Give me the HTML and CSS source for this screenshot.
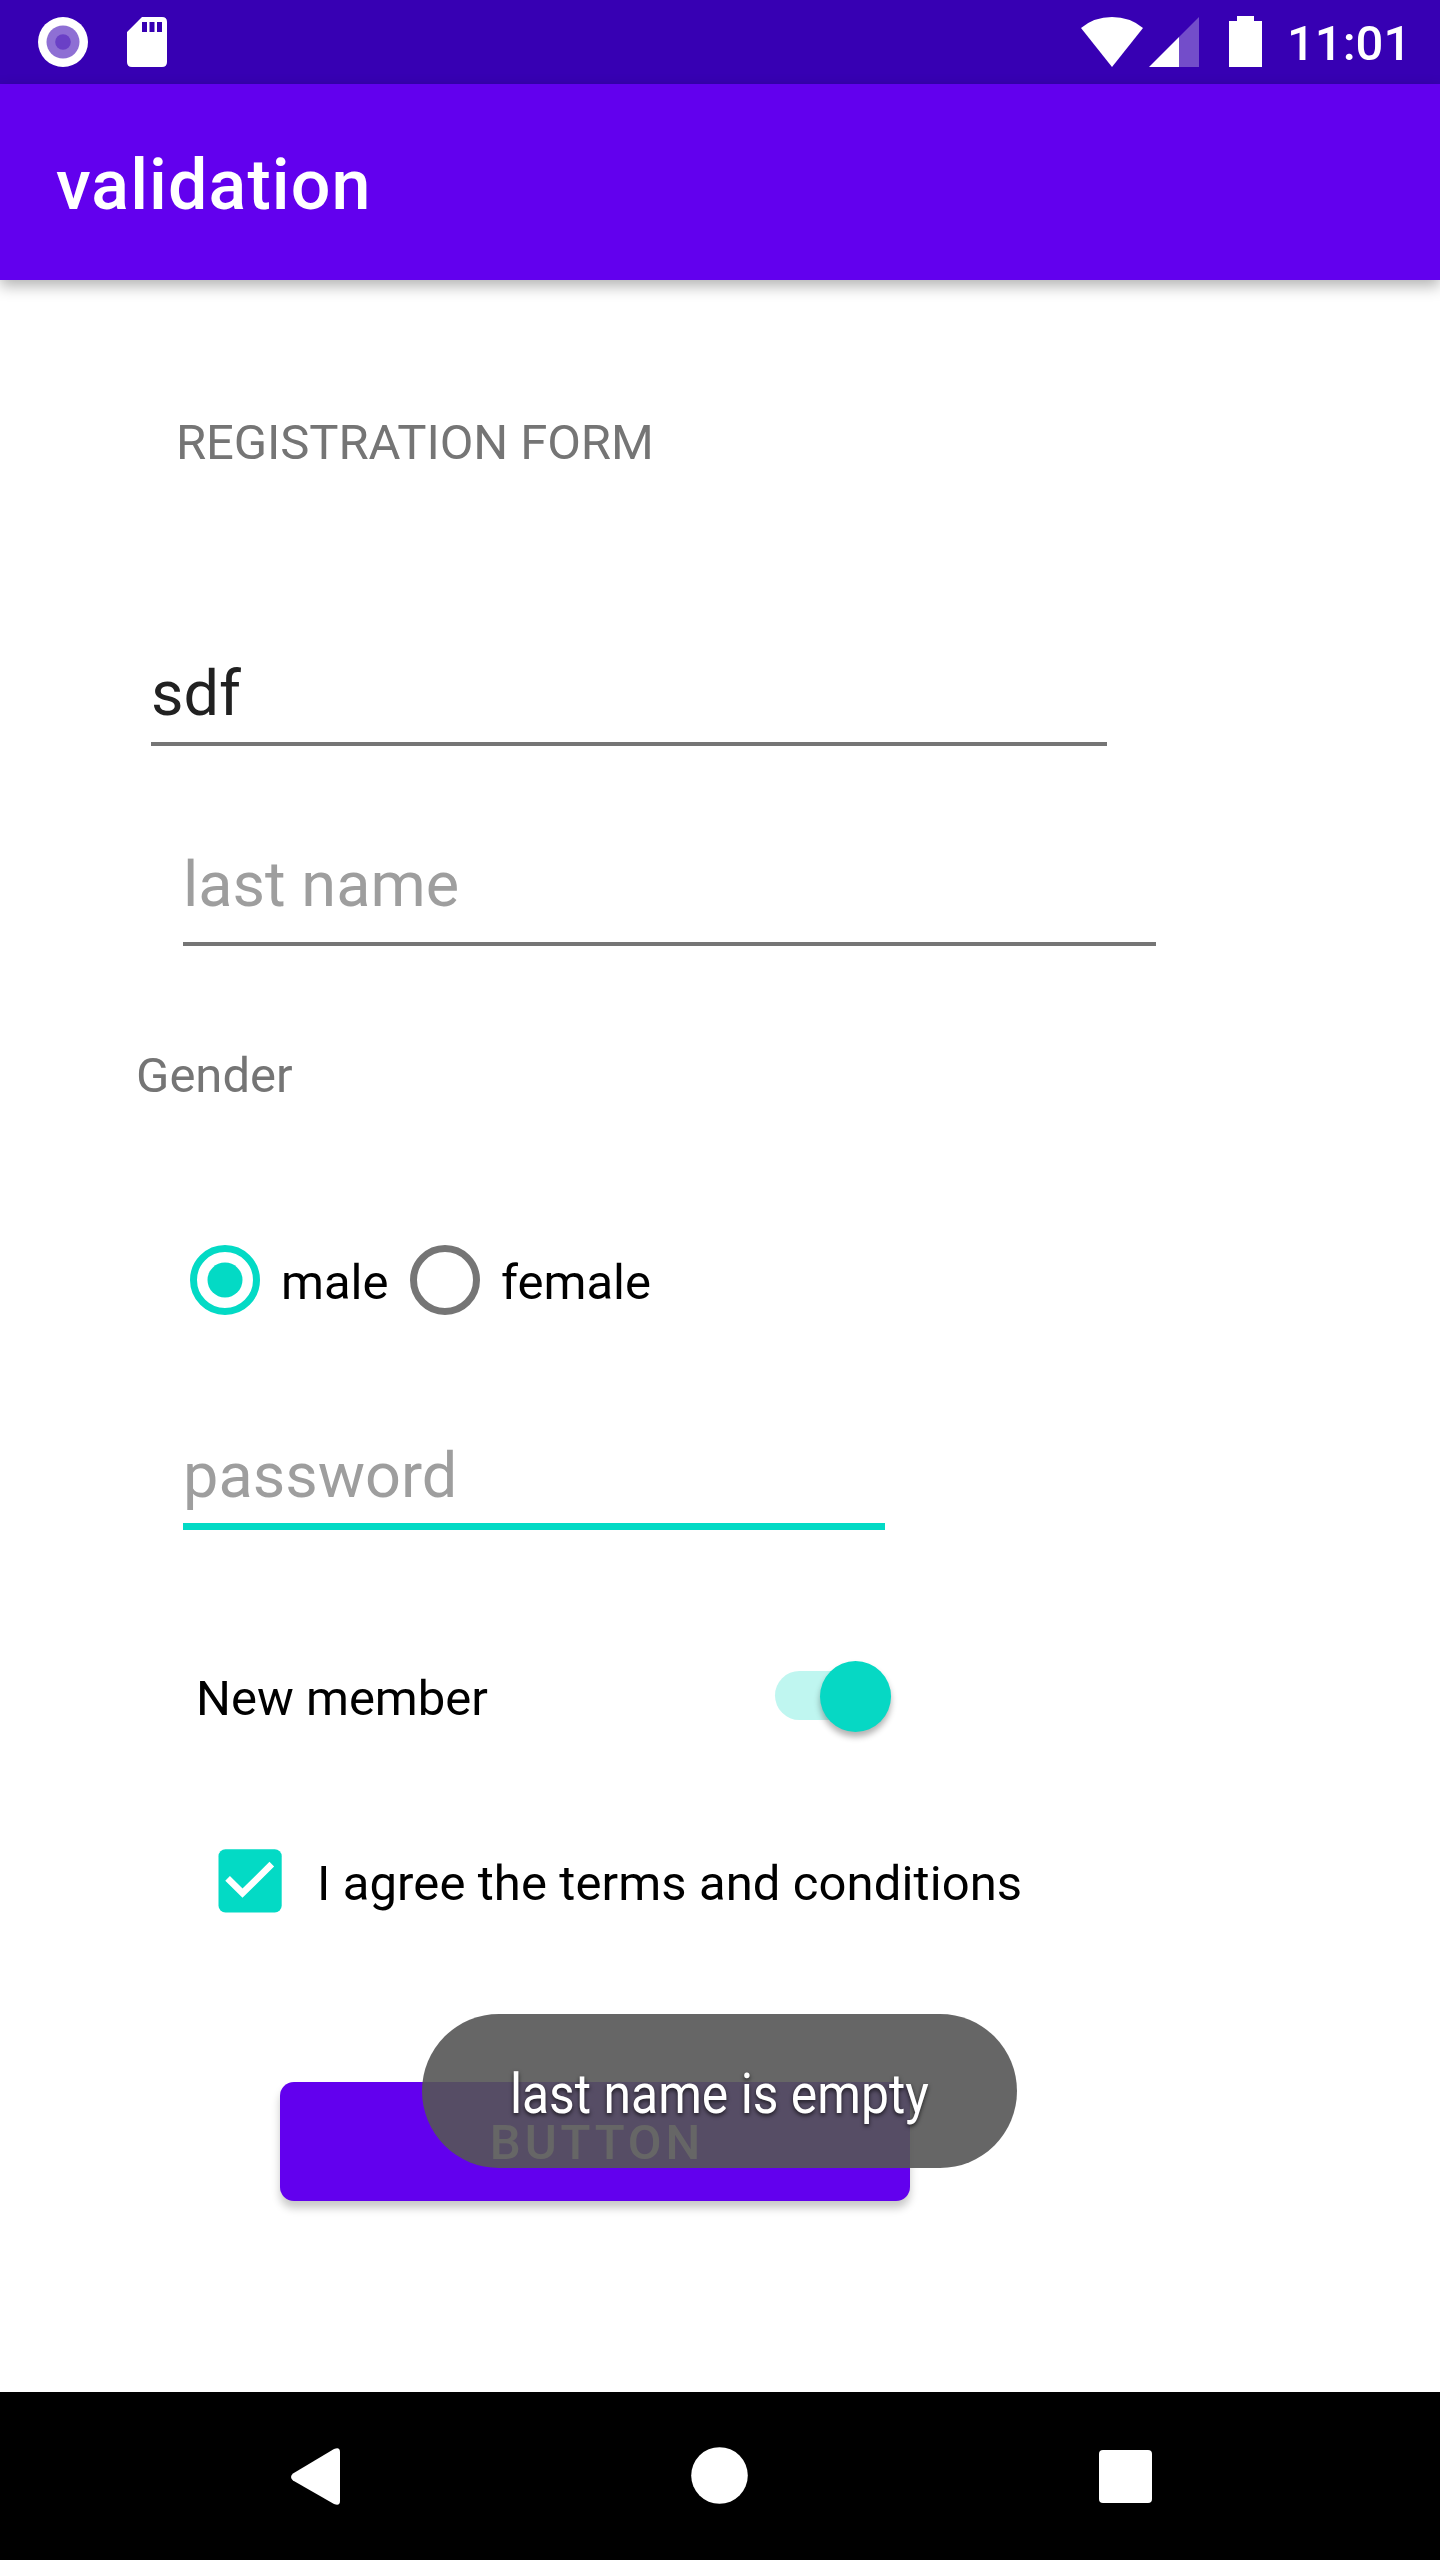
FILE: index.html
```html
<!DOCTYPE html>
<html lang="en">
<head>
<meta charset="utf-8">
<title>validation</title>
<link rel="stylesheet" href="styles.css">
</head>
<body>
<div class="screen">
  <header class="status">
    <svg class="status-left" width="180" height="84" viewBox="0 0 180 84">
      <circle cx="63" cy="42" r="25" fill="#fff"/>
      <circle cx="63" cy="42" r="16.5" fill="#8e6fd4"/>
      <circle cx="63" cy="42" r="7.8" fill="#6a40c6"/>
      <path fill="#fff" fill-rule="evenodd" d="M142 17H162Q167 17 167 22V62Q167 67 162 67H132Q127 67 127 62V32ZM142 22V32H147V22ZM149.500 22V32H154.500V22ZM157 22V32H162V22Z"/>
    </svg>
    <svg class="status-right" width="230" height="84" viewBox="1060 0 230 84">
      <path fill="#fff" d="M1112 67L1081 28Q1094 17 1112 17T1143 28Z"/>
      <path fill="#fff" fill-opacity=".3" d="M1179 37L1199 17V67H1179Z"/>
      <path fill="#fff" d="M1149 67L1179 37V67Z"/>
      <path fill="#fff" d="M1229 21H1237V16H1254V21H1262V67H1229Z"/>
    </svg>
    <span class="clock">11:01</span>
  </header>
  <div class="appbar"><h1 class="title">validation</h1></div>
  <main class="form">
    <div class="label heading">REGISTRATION FORM</div>
    <div class="field first">sdf</div>
    <div class="field last hint">last name</div>
    <div class="label gender">Gender</div>
    <div class="radios">
      <svg class="radio" width="70" height="70" viewBox="0 0 70 70"><circle cx="35" cy="35" r="31.500" fill="none" stroke="#03dac5" stroke-width="7"/><circle cx="35" cy="35" r="17.500" fill="#03dac5"/></svg>
      <span class="choice male">male</span>
      <svg class="radio" width="70" height="70" viewBox="0 0 70 70"><circle cx="35" cy="35" r="31.500" fill="none" stroke="#757575" stroke-width="7"/></svg>
      <span class="choice">female</span>
    </div>
    <div class="field password hint">password</div>
    <div class="member">
      <span class="choice">New member</span>
      <span class="track"><span class="thumb"></span></span>
    </div>
    <div class="agree">
      <svg class="check" width="64" height="64" viewBox="0 0 64 64"><rect x=".5" y=".3" width="63.200" height="63.200" rx="7" fill="#03dac5"/><path d="M9.600 29.300L24.500 44.200L53.800 15.200" fill="none" stroke="#fff" stroke-width="6.600"/></svg>
      <span class="choice">I agree the terms and conditions</span>
    </div>
    <div class="button">BUTTON</div>
  </main>
  <nav class="nav">
    <svg width="1440" height="168" viewBox="0 2392 1440 168" fill="#fff">
      <path d="M293 2473.500L334 2449Q340 2446.500 340 2452V2501Q340 2506.500 334 2504L293 2480.500Q289 2477 293 2473.500Z"/>
      <circle cx="719.500" cy="2475.500" r="28.300"/>
      <rect x="1099" y="2450" width="53" height="53" rx="4"/>
    </svg>
  </nav>
  <div class="toast"><span class="toast-text">last name is empty</span></div>
</div>
</body>
</html>
```
FILE: styles.css
```css
* { box-sizing: border-box; }
body { margin: 0; background: #fff; font-family: Roboto, sans-serif; }
.screen { position: relative; width: 1440px; height: 2560px; display: flex; flex-direction: column; overflow: hidden; }
.status { height: 84px; flex: none; display: flex; background: #3700b3; color: #fff; }
.status svg { display: block; }
.status-right { margin-left: 880px; }
.clock { font-size: 49px; font-weight: 500; line-height: 84px; padding-top: 2px; margin-left: -3px; }
.appbar { height: 196px; flex: none; background: #6200ee; box-shadow: 0 6px 14px rgba(0,0,0,.3); padding: 60px 0 0 56px; }
.title { margin: 0; color: #fff; font-size: 70px; font-weight: 500; line-height: 82px; letter-spacing: 1.1px; white-space: nowrap; }
.form { flex: 1; display: flex; flex-direction: column; align-items: flex-start; }
.label, .choice { font-size: 49px; line-height: 60px; white-space: nowrap; }
.label { color: #757575; }
.choice { color: #000; }
.heading { margin: 133px 0 0 176px; letter-spacing: -.1px; }
.field { font-size: 63px; line-height: 74px; color: #212121; border-bottom: 4px solid #757575; white-space: nowrap; }
.hint { color: #9e9e9e; }
.first { width: 956px; height: 93px; margin: 180px 0 0 151px; padding-top: 4px; }
.last { width: 973px; height: 102px; margin: 98px 0 0 183px; padding-top: 4px; }
.gender { margin: 100px 0 0 136px; }
.radios { display: flex; height: 70px; margin: 139px 0 0 190px; }
.radio { display: block; flex: none; }
.radios .choice { padding: 8px 0 0 21px; }
.male { width: 150px; }
.password { width: 702px; height: 96px; margin: 119px 0 0 183px; padding-top: 5px; border-bottom: 7px solid #03dac5; }
.member { display: flex; height: 71px; width: 710px; margin: 131px 0 0 196px; justify-content: space-between; }
.member .choice { padding-top: 8px; }
.track { width: 116px; height: 49px; margin: 10px 15px 0 0; border-radius: 25px; background: #bff6f0; display: flex; justify-content: flex-end; align-items: center; }
.thumb { width: 71px; height: 71px; flex: none; margin-top: 2px; border-radius: 50%; background: #06d8c4; box-shadow: 0 5px 6px rgba(0,0,0,.3); }
.agree { display: flex; margin: 117px 0 0 218px; }
.check { display: block; flex: none; }
.agree .choice { padding: 5px 0 0 35px; letter-spacing: .1px; }
.button { width: 630px; height: 119px; margin: 168px 0 0 280px; background: #6200ee; border-radius: 14px; box-shadow: 0 7px 8px rgba(0,0,0,.22); color: #fff; font-size: 49px; font-weight: 500; letter-spacing: 3.9px; line-height: 122px; padding-left: 4px; text-align: center; }
.nav { height: 168px; flex: none; background: #000; }
.nav svg { display: block; }
.toast { position: absolute; left: 422px; top: 2014px; width: 595px; height: 154px; border-radius: 77px; background: rgba(85,85,85,.902); color: #fff; display: flex; justify-content: center; font-size: 56px; line-height: 160px; white-space: nowrap; }
.toast-text { transform: scaleX(.89); text-shadow: 0 2px 5px rgba(0,0,0,.7); }
```
